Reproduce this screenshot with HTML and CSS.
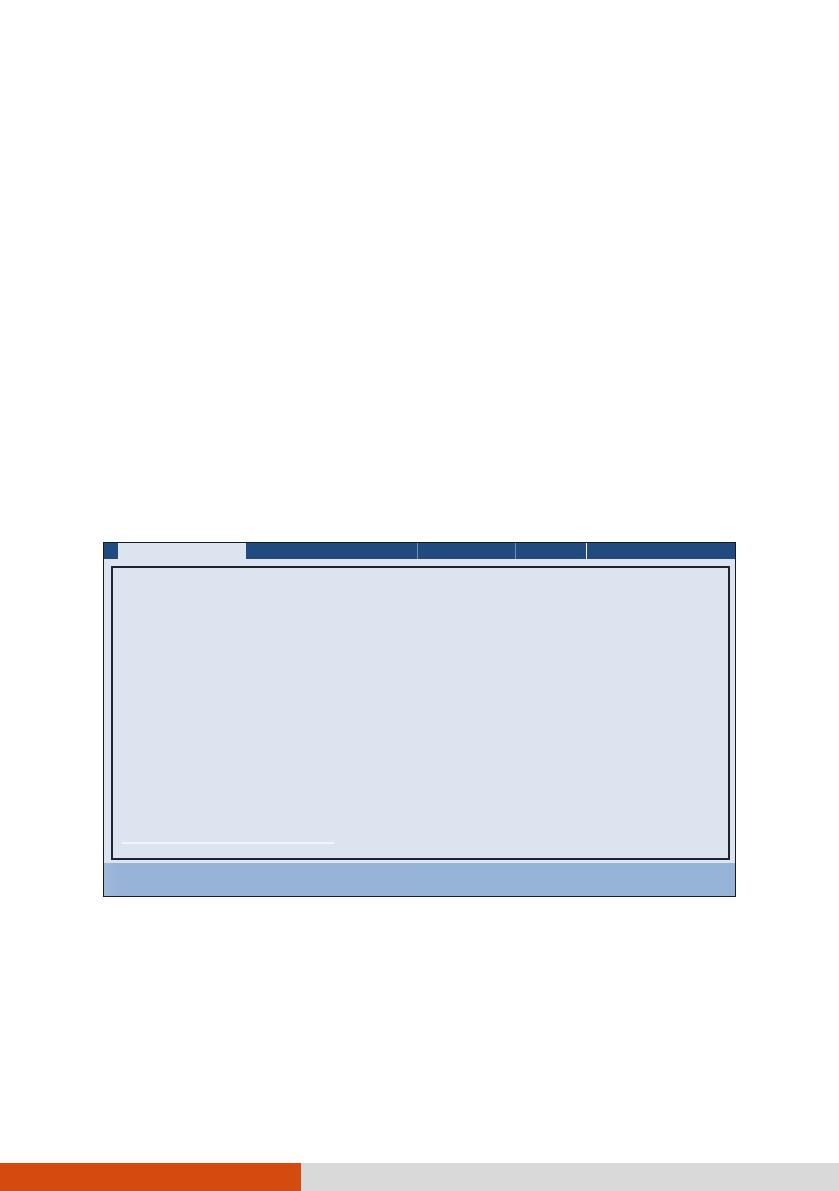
FILE: index.html
```html
<!DOCTYPE html>
<html lang="en">
<head>
<meta charset="utf-8">
<title>BIOS Setup</title>
<link rel="stylesheet" href="styles.css">
</head>
<body>
<div class="page">
  <main class="content">
    <section class="bios">
      <nav class="tabbar">
        <div class="tab-stub"></div>
        <div class="tab tab-active"></div>
        <div class="tab tab-w1"></div>
        <div class="tab tab-w2 sep-soft"></div>
        <div class="tab tab-w3 sep-soft"></div>
        <div class="tab tab-rest sep-white"></div>
      </nav>
      <div class="body-area">
        <div class="panel">
          <div class="panel-fill"></div>
          <div class="panel-line"></div>
        </div>
      </div>
      <div class="statusbar"></div>
    </section>
  </main>
  <footer class="footer">
    <div class="footer-accent"></div>
    <div class="footer-rest"></div>
  </footer>
</div>
</body>
</html>
```
FILE: styles.css
```css
html, body {
  margin: 0;
  padding: 0;
  background: #ffffff;
  font-family: "Liberation Sans", Arial, sans-serif;
}

.page {
  width: 839px;
  height: 1191px;
  display: flex;
  flex-direction: column;
}

.content {
  flex: 1;
  padding: 542px 0 0 103px;
}

.bios {
  width: 631px;
  height: 353px;
  border: 1px solid #151a24;
  background: #dce5ef;
  display: flex;
  flex-direction: column;
}

.tabbar {
  height: 16px;
  display: flex;
  background: #214a7e;
}

.tab-stub {
  width: 14px;
  background: #214a7e;
}

.tab {
  height: 100%;
  box-sizing: border-box;
}

.tab-active {
  width: 128px;
  background: #dce5ef;
}

.tab-w1 {
  width: 171px;
}

.tab-w2 {
  width: 98px;
}

.tab-w3 {
  width: 71px;
}

.tab-rest {
  flex: 1;
}

.sep-soft {
  border-left: 1px solid #6f8fb8;
}

.sep-white {
  border-left: 1px solid #f4f7fb;
}

.body-area {
  flex: 1;
  padding: 7px 5px 3px 7px;
  display: flex;
}

.panel {
  flex: 1;
  border: 2px solid #1c2332;
  display: flex;
  flex-direction: column;
  padding: 0 0 14px 9px;
}

.panel-fill {
  flex: 1;
}

.panel-line {
  width: 212px;
  height: 2px;
  background: #f3f6fa;
}

.statusbar {
  height: 33px;
  background: linear-gradient(90deg, #a1b9da 0, #97b3d8 14px, #96b3d8 100%);
}

.footer {
  height: 28px;
  display: flex;
}

.footer-accent {
  width: 301px;
  background: #d54a0f;
}

.footer-rest {
  flex: 1;
  background: #d9d9d9;
}
```
